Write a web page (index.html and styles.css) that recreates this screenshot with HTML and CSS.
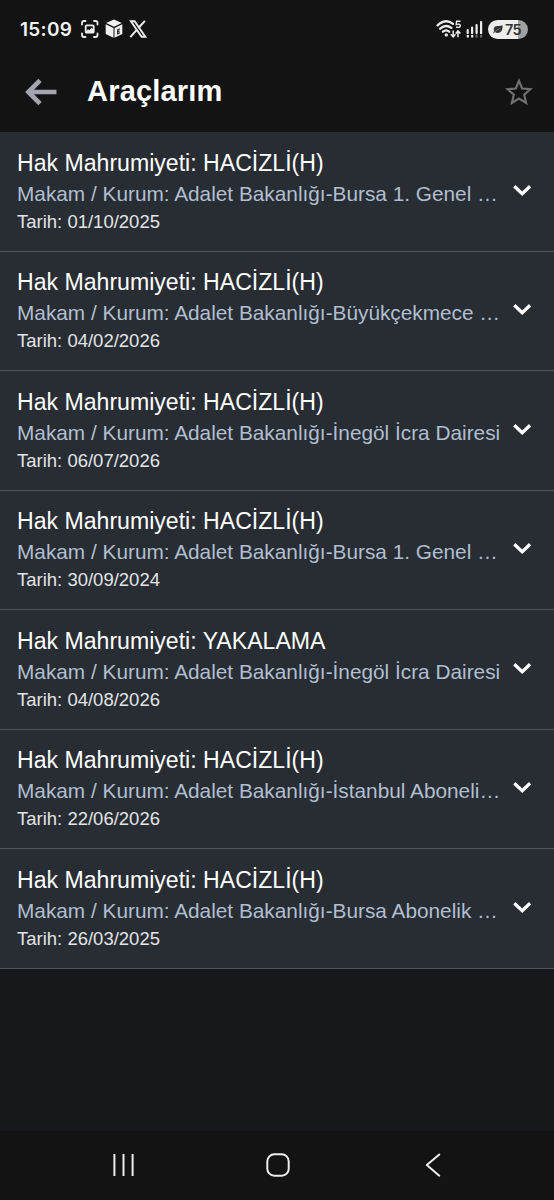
FILE: index.html
```html
<!DOCTYPE html>
<html lang="tr">
<head>
<meta charset="utf-8">
<title>Araçlarım</title>
<link rel="stylesheet" href="styles.css">
</head>
<body>
<div class="screen">
  <div class="status">
    <span class="clock">15:09</span>
    <svg class="status-left" width="68" height="20" viewBox="0 0 68 20">
      <g fill="none" stroke="#ededed" stroke-width="1.800" stroke-linecap="round">
        <path d="M2 5.500V4q0-2 2-2h1.500M14 2H15.500q2 0 2 2v1.500M17.500 14.500V16q0 2-2 2h-1.500M5.500 18H4q-2 0-2-2v-1.500"/>
        <rect x="5.700" y="6.300" width="8" height="7.400" rx="1"/>
      </g>
      <path d="M6 12.500l2-2.200 1.400 1 2.200-2.500 1.900 1.700v2.500H6z" fill="#ededed"/>
      <path d="M34 .6l7.800 3.500L34 7.700l-7.800-3.600zM25.700 5.200l7.800 3.700v9.800l-7.800-3.700zM34.500 8.900l7.800-3.700V15l-7.800 3.700z" fill="#f0f0f0"/>
      <path d="M39.900 9.800l-2.200 1v4l2.200-1M37.700 12.700l1.800-.8" fill="none" stroke="#222" stroke-width="1.200"/>
      <path d="M50.900 2.200h3.700l10.700 15.600h-3.700z" fill="none" stroke="#ededed" stroke-width="1.900"/>
      <path d="M64.900 1.800l-6.500 7.200M56.500 11.200L50.300 18.200" stroke="#ededed" stroke-width="2"/>
    </svg>
    <svg class="status-right" width="48" height="20" viewBox="0 0 48 20">
      <g fill="none" stroke="#ededed" stroke-width="2.300" stroke-linecap="round">
        <path d="M1.600 6.400Q9.500-.9 17 4.800M4.200 9.700q5.500-5 11.200-.8M7 12.700q3-2.600 6.200 0"/>
      </g>
      <circle cx="10.300" cy="15.900" r="1.700" fill="#ededed"/>
      <path d="M24.500 2.200h-3.900L20.200 5.600q3.800-1.300 4.100 1.100-.2 2.500-4.200 1.300" fill="none" stroke="#ededed" stroke-width="1.400"/>
      <path d="M17.200 11.500v6M14.800 15.300l2.400 2.600 2.300-2.600M22 18.200v-6M19.700 14.500l2.300-2.600 2.400 2.600" fill="none" stroke="#ededed" stroke-width="1.500"/>
      <path d="M31.700 11v3.200M36.100 8.600v5.600M40.600 6v8.200M45.100 3v11.200" stroke="#ededed" stroke-width="2.200" stroke-linecap="round"/>
      <path d="M30.700 17.300h2.200M35.100 17.300h2.200" stroke="#ededed" stroke-width="2.400"/>
      <path d="M39.500 17.300h2.200M44 17.300h2.200" stroke="#666" stroke-width="2.400"/>
    </svg>
    <span class="battery">
      <svg width="10" height="9" viewBox="0 0 10 9"><path d="M9.600.3Q10 7.900 4.700 8 3 8 2 7L.7 8.300.1 7.700 1.200 6.400Q-.5 1 5 1.100 8 1.200 9.600.3z" fill="#333"/><path d="M2 6.500L6.700 3.300" stroke="#aaa" stroke-width=".6"/></svg>
      <span>75</span>
    </span>
  </div>
  <header class="appbar">
    <svg class="back" width="34" height="28" viewBox="0 0 34 28"><path d="M33.500 14H5.500M17 2.300L5.400 14 17 25.700" fill="none" stroke="#a4a5b2" stroke-width="4.700"/></svg>
    <h1>Araçlarım</h1>
    <svg class="star" width="28" height="28" viewBox="0 0 28 28"><path d="M14 2.800l3.200 7.700 8.200.7-6.200 5.500 1.900 8.200-7.100-4.400-7.100 4.400 1.900-8.200-6.200-5.500 8.200-.7z" fill="none" stroke="#707070" stroke-width="2.200"/></svg>
  </header>
  <main class="list">
    <article class="row"><div class="info"><h2>Hak Mahrumiyeti: HACİZLİ(H)</h2><p class="office">Makam / Kurum: Adalet Bakanlığı-Bursa 1. Genel …</p><p class="date">Tarih: 01/10/2025</p></div><svg class="chevron" viewBox="0 0 20 14"><path d="M2.300 3.200l7.900 7.600L18.100 3.200"/></svg></article>
    <article class="row"><div class="info"><h2>Hak Mahrumiyeti: HACİZLİ(H)</h2><p class="office">Makam / Kurum: Adalet Bakanlığı-Büyükçekmece …</p><p class="date">Tarih: 04/02/2026</p></div><svg class="chevron" viewBox="0 0 20 14"><path d="M2.300 3.200l7.900 7.600L18.100 3.200"/></svg></article>
    <article class="row"><div class="info"><h2>Hak Mahrumiyeti: HACİZLİ(H)</h2><p class="office">Makam / Kurum: Adalet Bakanlığı-İnegöl İcra Dairesi</p><p class="date">Tarih: 06/07/2026</p></div><svg class="chevron" viewBox="0 0 20 14"><path d="M2.300 3.200l7.900 7.600L18.100 3.200"/></svg></article>
    <article class="row"><div class="info"><h2>Hak Mahrumiyeti: HACİZLİ(H)</h2><p class="office">Makam / Kurum: Adalet Bakanlığı-Bursa 1. Genel …</p><p class="date">Tarih: 30/09/2024</p></div><svg class="chevron" viewBox="0 0 20 14"><path d="M2.300 3.200l7.900 7.600L18.100 3.200"/></svg></article>
    <article class="row"><div class="info"><h2>Hak Mahrumiyeti: YAKALAMA</h2><p class="office">Makam / Kurum: Adalet Bakanlığı-İnegöl İcra Dairesi</p><p class="date">Tarih: 04/08/2026</p></div><svg class="chevron" viewBox="0 0 20 14"><path d="M2.300 3.200l7.900 7.600L18.100 3.200"/></svg></article>
    <article class="row"><div class="info"><h2>Hak Mahrumiyeti: HACİZLİ(H)</h2><p class="office">Makam / Kurum: Adalet Bakanlığı-İstanbul Aboneli…</p><p class="date">Tarih: 22/06/2026</p></div><svg class="chevron" viewBox="0 0 20 14"><path d="M2.300 3.200l7.900 7.600L18.100 3.200"/></svg></article>
    <article class="row"><div class="info"><h2>Hak Mahrumiyeti: HACİZLİ(H)</h2><p class="office">Makam / Kurum: Adalet Bakanlığı-Bursa Abonelik …</p><p class="date">Tarih: 26/03/2025</p></div><svg class="chevron" viewBox="0 0 20 14"><path d="M2.300 3.200l7.900 7.600L18.100 3.200"/></svg></article>
  </main>
  <nav class="navbar">
    <svg width="24" height="24" viewBox="0 0 24 24"><path d="M3.400 1v22M12.500 1v22M21.600 1v22"/></svg>
    <svg width="26" height="26" viewBox="0 0 26 26"><rect x="2.300" y="2.300" width="21.400" height="21.400" rx="7"/></svg>
    <svg width="18" height="26" viewBox="0 0 18 26"><path d="M15.300 2.500L2.800 13l12.500 10.700" stroke-linecap="round" stroke-linejoin="round"/></svg>
  </nav>
</div>
</body>
</html>
```
FILE: styles.css
```css
* { box-sizing: border-box; }
body { margin: 0; background: #17181c; font-family: "Liberation Sans", Arial, sans-serif; }
h1, h2, p { margin: 0; font-weight: 400; white-space: nowrap; }
svg { display: block; flex: none; }
.screen { width: 554px; height: 1200px; display: flex; flex-direction: column; background: #17181c; }
.status { height: 58px; flex: none; display: flex; align-items: center; padding: 0 26px 0 20px; background: #131313; }
.clock { font: 600 19px/24px Inter, sans-serif; color: #f2f2f2; width: 60px; letter-spacing: 0.3px; padding-top: 1px; }
.status-right { margin-left: auto; }
.battery { width: 40px; height: 19px; margin-left: 4px; padding-left: 5px; border-radius: 10px; display: flex; align-items: center; gap: 2px; background: linear-gradient(90deg, #ededed 30px, #a0a0a0 30px); font: 600 14.5px/19px Inter, sans-serif; color: #333; letter-spacing: -0.6px; }
.appbar { height: 74px; flex: none; display: flex; align-items: center; padding: 0 21px 6px 23px; background: #131313; }
.appbar h1 { margin: -2px 0 0 30px; font-size: 29px; line-height: 34px; font-weight: 700; letter-spacing: 0.2px; color: #fff; }
.star { margin-left: auto; }
.list { flex: none; }
.row { height: 119.5px; display: flex; align-items: flex-start; justify-content: space-between; padding: 15.6px 22px 0 17px; background: #282c33; border-bottom: 1px solid #50545a; }
.row h2 { font-size: 23.1px; line-height: 30px; color: #fff; }
.office { font-size: 20.8px; line-height: 32px; color: #b0bfd0; }
.date { font-size: 18.5px; line-height: 23px; color: #e2e4e6; }
.chevron { width: 20px; height: 14px; margin-top: 35.4px; fill: none; stroke: #fff; stroke-width: 3.3; }
.navbar { height: 69px; margin-top: auto; flex: none; display: flex; align-items: center; gap: 130px; padding: 0 0 1px 111px; background: #131313; fill: none; stroke: #ededed; stroke-width: 2; }
.navbar svg:last-child { margin-left: 3px; }
```
